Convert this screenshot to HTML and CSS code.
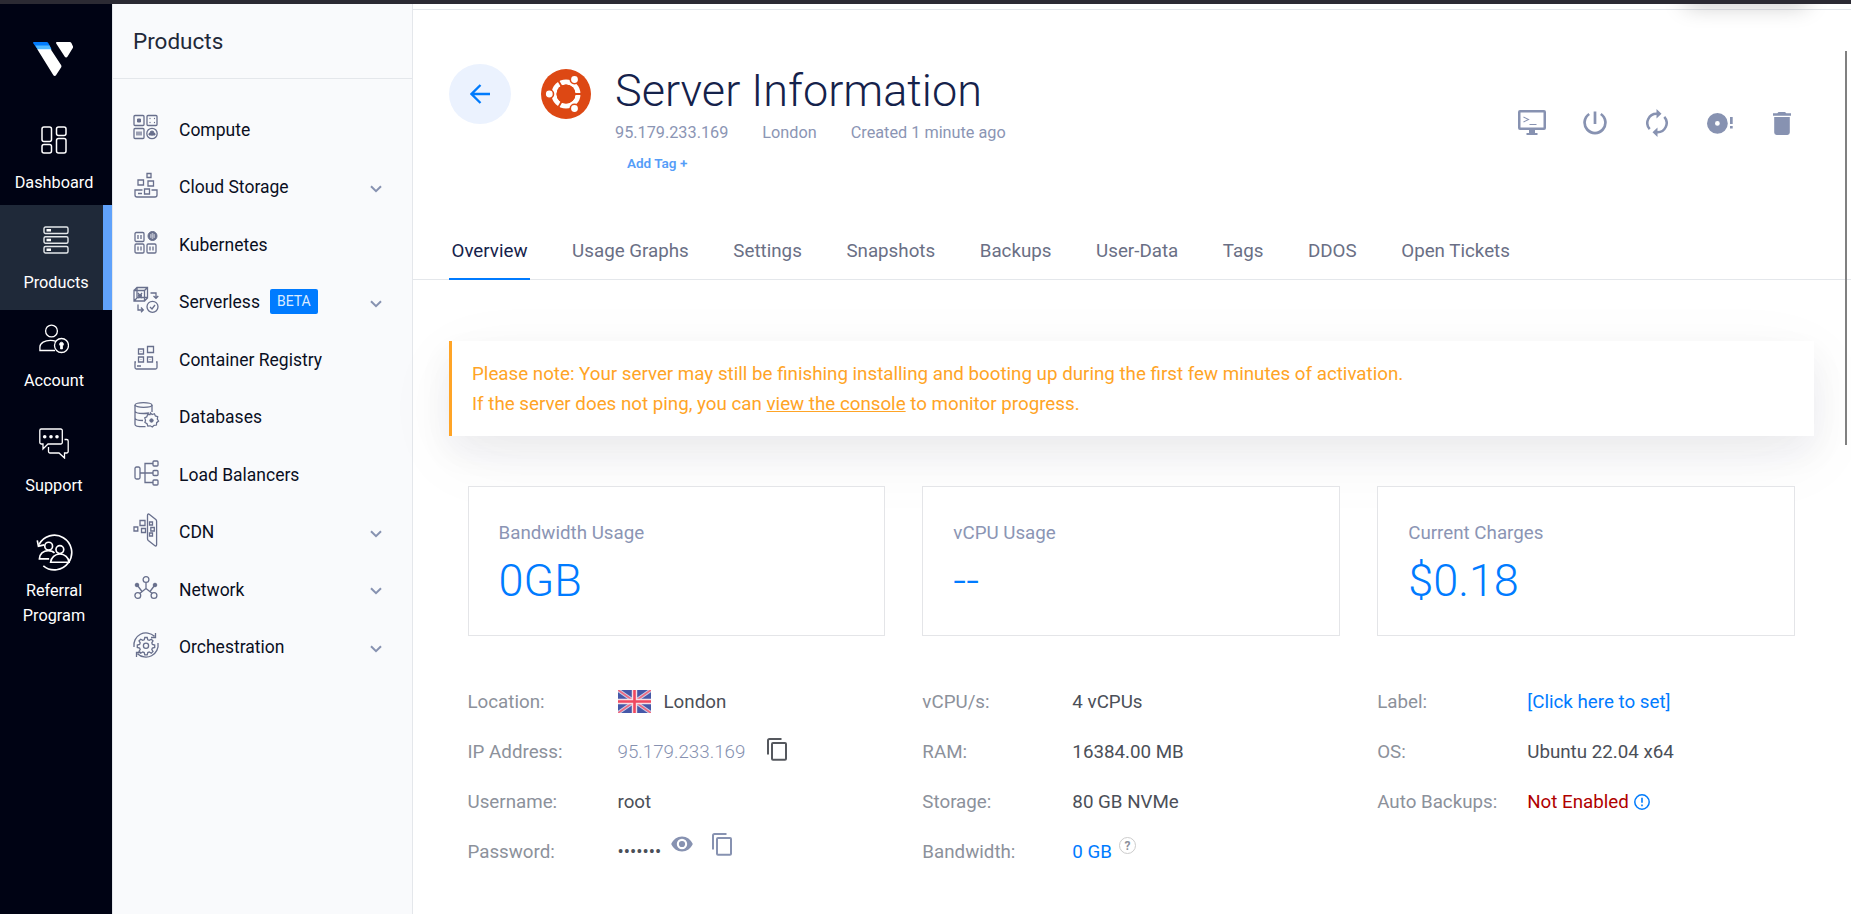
FILE: index.html
```html
<!DOCTYPE html>
<html lang="en">
<head>
<meta charset="utf-8">
<title>Server Information</title>
<link rel="stylesheet" href="styles.css">
</head>
<body>
<div class="topbar"></div>
<div class="app">
  <nav class="rail">
    <a class="logo" href="#"><svg width="40" height="34" viewBox="0 0 40 34"><path d="M0.8 0H13.600a2 2 0 0 1 1.700 0.900L18.500 7H4.300L0.400 1.600C-.2.800 0 0 .8 0Z" fill="#007bfc"/><path d="M2.300 3.500H16.500L18.500 8H5Z" fill="#51b9ff"/><path d="M4.300 7.300H17.700L28.200 23.200a2 2 0 0 1 0 2L23 33.200a1.500 1.500 0 0 1-2.600 0Z" fill="#fff"/><path d="M24 0H36.800a2 2 0 0 1 1.600.9L39.800 4a2 2 0 0 1 0 2L34.400 14.800a1.500 1.500 0 0 1-2.600 0L23.200 1.500C22.700.600 23.200 0 24 0Z" fill="#fff"/></svg></a>
    <a class="rail-item" href="#">
      <svg width="26" height="28" viewBox="0 0 26 28" fill="none" stroke="#fff" stroke-width="1.500"><rect x="1" y="1" width="9.500" height="14.500" rx="2"/><rect x="15.500" y="1" width="9.500" height="8.500" rx="2"/><rect x="1" y="18.500" width="9.500" height="8.500" rx="2"/><rect x="15.500" y="12.500" width="9.500" height="14.500" rx="2"/></svg>
      <span>Dashboard</span>
    </a>
    <a class="rail-item active" href="#">
      <svg width="26" height="28" viewBox="0 0 26 28" fill="none" stroke="#e4e7ea" stroke-width="1.400"><rect x="1" y="1" width="24" height="6.500" rx="1.500"/><rect x="1" y="10.700" width="24" height="6.500" rx="1.500"/><rect x="1" y="20.500" width="24" height="6.500" rx="1.500"/><path d="M3.500 4.300H8M3.500 14H8M3.500 23.800H8" stroke="#fff" stroke-width="2.400"/></svg>
      <span>Products</span>
    </a>
    <a class="rail-item account" href="#">
      <svg width="30" height="30" viewBox="0 0 30 30" fill="none" stroke="#fff" stroke-width="1.300"><circle cx="12.500" cy="7" r="5.900"/><path d="M16 26.500H.9V23c0-4 5-6.700 10.500-6.700 2 0 4 .4 5.600 1"/><circle cx="22.500" cy="21.500" r="7"/><path d="M22.500 18.200a2 2 0 0 1 1 3.700v3h-2v-3a2 2 0 0 1 1-3.700Z" fill="#fff" stroke-width=".8"/></svg>
      <span>Account</span>
    </a>
    <a class="rail-item support" href="#">
      <svg width="30" height="31" viewBox="0 0 30 31" fill="none" stroke="#fff" stroke-width="1.300"><path d="M2.200 1h19.600a1.500 1.500 0 0 1 1.500 1.500v12a1.500 1.500 0 0 1-1.500 1.500H9l-5 5V16H2.200A1.500 1.500 0 0 1 .8 14.500v-12A1.500 1.500 0 0 1 2.200 1Z"/><path d="M25.500 11.500h2.200a1.500 1.500 0 0 1 1.500 1.500v10.500a1.500 1.500 0 0 1-1.500 1.500H25.500v5L20 25H11a1.500 1.500 0 0 1-1.500-1.500V19"/><g fill="#fff" stroke="none"><circle cx="5.700" cy="8.800" r="1.800"/><circle cx="12" cy="8.800" r="1.800"/><circle cx="18" cy="8.800" r="1.800"/></g></svg>
      <span>Support</span>
    </a>
    <a class="rail-item referral" href="#">
      <svg width="37" height="38" viewBox="0 0 37 38" fill="none" stroke="#fff" stroke-width="1.700"><path d="M2.500 11A17.800 17.800 0 1 1 7 32.700"/><path d="M.8 6.500 2 12.500l6-1.300" /><circle cx="12.500" cy="12.500" r="4"/><path d="M13 25.500H3c0-5 4-8.500 9-8.500 2.700 0 5 .8 6.500 2.500"/><circle cx="24" cy="16" r="4"/><path d="M14.500 29h19c-.500-5-4.500-8.500-9.500-8.500s-9 3.500-9.500 8.500Z"/></svg>
      <span>Referral Program</span>
    </a>
  </nav>
  <aside class="panel">
    <h2 class="panel-title">Products</h2>
    <ul class="menu">
      <li><svg class="mi first" viewBox="0 0 26 26"><rect x="1" y="1.500" width="10" height="10" rx="1"/><rect x="14" y="1.500" width="10" height="10" rx="1"/><rect x="1" y="14.500" width="10" height="10" rx="1"/><circle cx="19" cy="19.500" r="5.200"/><path d="M4.500 5h3v3h-3ZM16 19.500h6v1.500h-6Z" class="f"/><path d="M4 17.500v4M6 17.500v4M8 17.500v4" /><path d="M17 4.500v.1M21.500 4.500v.1M17 8.500v.1M21.500 8.500v.1" stroke-linecap="round"/><circle cx="19" cy="19" r="2" class="f"/></svg><span>Compute</span></li>
      <li><svg class="mi" viewBox="0 0 26 26"><path d="M14 1.500h4v4h-4ZM5 8h5.500v5H5ZM15 9h5.500v5H15ZM11.500 17h5v5h-5Z"/><path d="M9.500 18H2v5a2 2 0 0 0 2 2h18a2 2 0 0 0 2-2v-5h-5.500M5 21.500h4"/></svg><span>Cloud Storage</span><svg class="chev" viewBox="0 0 12 8"><path d="M1 1.200 6 6.200 11 1.200"/></svg></li>
      <li><svg class="mi" viewBox="0 0 26 26"><rect x="2" y="2.500" width="9" height="9" rx="1.200"/><rect x="2" y="14" width="9" height="9" rx="1.200"/><rect x="14" y="14" width="9" height="9" rx="1.200"/><path d="M5 5v4M8 5v4M5 16.500v4M8 16.500v4M17 16.500v4M20 16.500v4"/><circle cx="19.500" cy="6" r="4.500" class="f"/><g class="k"><circle cx="19.500" cy="6" r="2.200"/><path d="M19.500 3v6M17 4.500l5 3M22 4.500l-5 3"/></g></svg><span>Kubernetes</span></li>
      <li><svg class="mi" viewBox="0 0 26 26"><path d="M1 3.500h10.500v10.500H1ZM1 3.500l3-3h10.500v10.500l-3 3M11.500 3.500l3-3M4 1v9.500H14M1 14l3-3"/><path d="m5 6 4 5M9 6l-4 5M5 8.500h4"/><circle cx="19.500" cy="19.800" r="5.500"/><path d="m17 20 2 2 3-4M17.500 6h5.500v5M20.500 9l2.500 2.300L25.300 9M5 17.500V23h5M8 20.500l2.300 2.500L8 25.300"/></svg><span>Serverless</span><b class="beta">BETA</b><svg class="chev" viewBox="0 0 12 8"><path d="M1 1.200 6 6.200 11 1.200"/></svg></li>
      <li><svg class="mi" viewBox="0 0 26 26"><path d="M14.500 1.500h6v6h-6ZM5.500 4h5v5h-5ZM5.500 12h5v5h-5ZM14.500 12h5v5h-5ZM8 6.500v.5M8 14.500v.5M17 14.500v.5M4 21h4"/><path d="M3 17H2v5.500a1.500 1.500 0 0 0 1.500 1.500h19a1.500 1.500 0 0 0 1.500-1.500V17h-1"/></svg><span>Container Registry</span></li>
      <li><svg class="mi" viewBox="0 0 26 26"><ellipse cx="10.500" cy="3" rx="8.500" ry="2.300"/><path d="M2 3v19.500c0 1.200 3.500 2.200 8.500 2.200h2M19 3v7M2 9c0 1.500 3.500 2.500 8.500 2.500 2 0 4-.2 5.500-.500M2 16c0 1.500 3.500 2.500 8 2.500"/><path d="m17.500 11 1.800 1.700 2.400-.8 1 2.300 2.400.8-.4 2.500 1.300 2-2 1.700-.2 2.500-2.500.3-1.800 1.700-2.200-1.200-2.500.2-.8-2.400-2.200-1.200.6-2.500-.8-2.400 2.200-1.200.9-2.400 2.500.2Z" transform="translate(.6 .3) scale(.96)"/><circle cx="18.500" cy="18.500" r="1.700" class="f"/></svg><span>Databases</span></li>
      <li><svg class="mi" viewBox="0 0 26 26"><rect x="2" y="7" width="5" height="12" rx="1.500"/><rect x="20" y="1" width="5" height="5" rx="1"/><rect x="20" y="10.500" width="5" height="5" rx="1"/><rect x="20" y="20" width="5" height="5" rx="1"/><path d="M20 3.500h-8v19h8M7 13h13"/></svg><span>Load Balancers</span></li>
      <li><svg class="mi tall" viewBox="0 0 26 34"><path d="M14.500 2.200c0-1 .9-1.500 1.700-1L22.800 6.500c.5.500.8 1 .8 1.700V31.800c0 1-.8 1.500-1.700 1L15.300 27.500c-.5-.500-.8-1-.8-1.700ZM7 7.500h5v5H7ZM1 14h3.800v4H1ZM8.500 15.500h4v4h-4ZM16.500 9h3v3h-3ZM17.800 14.500h3.500v3.500h-3.500ZM16.500 20h3v3h-3Z"/></svg><span>CDN</span><svg class="chev" viewBox="0 0 12 8"><path d="M1 1.200 6 6.200 11 1.200"/></svg></li>
      <li><svg class="mi" viewBox="0 0 26 26"><circle cx="13" cy="4.500" r="2.900"/><circle cx="4.800" cy="20.500" r="2.900"/><circle cx="21" cy="20.500" r="2.900"/><path d="M13 7.500v6l-6.300 5M13 13.500l6.300 5M4.500 10.500 9 16.500M21.500 10.500 17 16.500"/><circle cx="4" cy="10" r="1.800" class="f"/><circle cx="22" cy="10" r="1.800" class="f"/></svg><span>Network</span><svg class="chev" viewBox="0 0 12 8"><path d="M1 1.200 6 6.200 11 1.200"/></svg></li>
      <li><svg class="mi" viewBox="0 0 26 26"><path d="M1 15A12.200 12.200 0 0 1 21.500 4.300M25 11A12.200 12.200 0 0 1 4.500 21.700M22.500 1v4.500H18M3.500 25v-4.500H8"/><path d="M11.800 5.500h2.400l.6 2.300 1.500.600 2-1.200 1.700 1.700-1.200 2 .6 1.500 2.300.6v2.400l-2.300.6-.6 1.500 1.200 2-1.700 1.700-2-1.200-1.500.6-.6 2.300h-2.400l-.6-2.300-1.500-.600-2 1.200L6 19.500l1.200-2-.6-1.500-2.300-.6V13l2.300-.6.600-1.500-1.200-2L7.700 7.200l2 1.200 1.500-.6Z"/><circle cx="13" cy="13.800" r="2.600"/></svg><span>Orchestration</span><svg class="chev" viewBox="0 0 12 8"><path d="M1 1.200 6 6.200 11 1.200"/></svg></li>
    </ul>
  </aside>
  <main class="main">
    <header class="head">
      <a class="back" href="#"><svg width="20" height="20" viewBox="0 0 20 20"><path d="M20 10H2M10.500 1 1.500 10l9 9" fill="none" stroke="#007bfc" stroke-width="2.300"/></svg></a>
      <svg class="os" width="50" height="50" viewBox="0 0 50 50"><circle cx="25" cy="25" r="25" fill="#dd4814"/><circle cx="25" cy="25" r="12" fill="none" stroke="#fff" stroke-width="5"/><path d="M25 25H45M25 25 15 7.700M25 25 15 42.300" stroke="#dd4814" stroke-width="1.800"/><g fill="#fff" stroke="#dd4814" stroke-width="1.600"><circle cx="8.300" cy="25" r="4.200"/><circle cx="33.500" cy="10.500" r="4.200"/><circle cx="33.500" cy="39.500" r="4.200"/></g><circle cx="25" cy="25" r="9.500" fill="#dd4814"/></svg>
      <div class="head-text">
        <h1>Server Information</h1>
        <p class="meta"><span>95.179.233.169</span><span>London</span><span>Created 1 minute ago</span></p>
        <a class="tag" href="#">Add Tag +</a>
      </div>
      <div class="actions">
        <span><svg width="28" height="26" viewBox="0 0 28 26"><path fill-rule="evenodd" d="M2 0h24a2 2 0 0 1 2 2v16a2 2 0 0 1-2 2H17v3h2.500v2h-11v-2H11v-3H2a2 2 0 0 1-2-2V2A2 2 0 0 1 2 0Zm.500 2.500v15h23v-15Z"/><path d="m5.500 7 5 2.500-5 2.500M11.500 14.500h7" fill="none" stroke="#8792b1" stroke-width="1.100"/></svg></span>
        <span><svg width="24" height="24" viewBox="0 0 24 24"><path d="M6.200 3A10.400 10.400 0 1 0 17.800 3M12 .5V13" fill="none" stroke="#8792b1" stroke-width="2.700"/></svg></span>
        <span><svg width="22" height="28" viewBox="0 0 22 28"><path d="M18.300 7.900A9.200 9.200 0 0 1 11 23.200M3.700 20.100A9.200 9.200 0 0 1 11 4.800" fill="none" stroke="#8792b1" stroke-width="2.500"/><path d="M10.500 0v9.500L15.500 4.800ZM11.500 28v-9.500L6.500 23.200Z"/></svg></span>
        <span><svg width="26" height="21" viewBox="0 0 26 21"><path fill-rule="evenodd" d="M10.400 0a10.400 10.400 0 1 1 0 20.800 10.400 10.400 0 0 1 0-20.800Zm0 8a2.400 2.400 0 1 0 0 4.800 2.400 2.400 0 0 0 0-4.800ZM23 4h2.700v7H23Zm0 9h2.700v2.500H23Z"/></svg></span>
        <span><svg width="18" height="23" viewBox="0 0 18 23"><path d="M5.500 0h6.500l1.300 1.200H18V3.700H0V1.200H4.300ZM1.200 5h15.600v15.500a2.400 2.400 0 0 1-2.400 2.400H3.600a2.400 2.400 0 0 1-2.400-2.400Z"/></svg></span>
      </div>
    </header>
    <nav class="tabs">
      <a class="on" href="#">Overview</a><a href="#">Usage Graphs</a><a href="#">Settings</a><a href="#">Snapshots</a><a href="#">Backups</a><a href="#">User-Data</a><a href="#">Tags</a><a href="#">DDOS</a><a href="#">Open Tickets</a>
    </nav>
    <div class="notice">Please note: Your server may still be finishing installing and booting up during the first few minutes of activation.<br>If the server does not ping, you can <a href="#">view the console</a> to monitor progress.</div>
    <section class="cards">
      <div class="card"><p>Bandwidth Usage</p><strong>0GB</strong></div>
      <div class="card"><p>vCPU Usage</p><strong>--</strong></div>
      <div class="card"><p>Current Charges</p><strong>$0.18</strong></div>
    </section>
    <section class="details">
      <dl>
        <dt>Location:</dt><dd><svg class="flag" width="33" height="23" viewBox="0 0 33 23"><path fill="#4558a8" d="M0 0h33v23H0z"/><path d="m0 0 33 23M33 0 0 23" stroke="#c9cfe8" stroke-width="3.600"/><path d="m0 0 33 23M33 0 0 23" stroke="#ee6a82" stroke-width="1.800"/><path d="M16.500 0v23M0 11.500h33" stroke="#f6dfe6" stroke-width="5.400"/><path d="M16.500 0v23M0 11.500h33" stroke="#f0485f" stroke-width="2.600"/></svg>London</dd>
        <dt>IP Address:</dt><dd class="ip">95.179.233.169<svg class="copy dark" width="20" height="23" viewBox="0 0 20 23"><path d="M1 16.500V2.500A1.500 1.500 0 0 1 2.500 1H14.500"/><rect x="5" y="5" width="14" height="16.800" rx="1"/></svg></dd>
        <dt>Username:</dt><dd>root</dd>
        <dt>Password:</dt><dd class="pw"><span class="dots">•••••••</span><svg class="eye" width="22" height="16" viewBox="0 0 22 16"><path fill="#8792b1" fill-rule="evenodd" d="M11 .5c4.800 0 8.900 3 10.800 7.500-1.900 4.500-6 7.500-10.800 7.500S2.100 12.500.2 8C2.100 3.500 6.200.5 11 .5Zm0 2.300a5.200 5.200 0 1 0 0 10.400 5.200 5.200 0 0 0 0-10.400Z"/><circle cx="11" cy="8" r="3.100" fill="#8792b1"/></svg><svg class="copy" width="20" height="23" viewBox="0 0 20 23"><path d="M1 16.500V2.500A1.500 1.500 0 0 1 2.500 1H14.500"/><rect x="5" y="5" width="14" height="16.800" rx="1"/></svg></dd>
      </dl>
      <dl>
        <dt>vCPU/s:</dt><dd>4 vCPUs</dd>
        <dt>RAM:</dt><dd>16384.00 MB</dd>
        <dt>Storage:</dt><dd>80 GB NVMe</dd>
        <dt>Bandwidth:</dt><dd class="blue">0 GB<span class="help">?</span></dd>
      </dl>
      <dl>
        <dt>Label:</dt><dd class="blue">[Click here to set]</dd>
        <dt>OS:</dt><dd>Ubuntu 22.04 x64</dd>
        <dt>Auto Backups:</dt><dd class="red">Not Enabled<svg class="info" width="16" height="16" viewBox="0 0 16 16"><circle cx="8" cy="8" r="7.200" fill="none" stroke="#007bfc" stroke-width="1.500"/><path d="M8 3.800v5M8 10.500v1.700" stroke="#007bfc" stroke-width="1.600"/></svg></dd>
      </dl>
    </section>
  </main>
</div>
<div class="scroll"></div>
<div class="drop"></div>
</body>
</html>
```
FILE: styles.css
```css
* { box-sizing: border-box; }
html, body { margin: 0; height: 100%; overflow: hidden; }
body { display: flex; flex-direction: column; font-family: Roboto, "Liberation Sans", sans-serif; background: #fff; color: #4b4f58; }
a { color: inherit; text-decoration: none; }
h1, h2, p, ul, dl, dd { margin: 0; padding: 0; }
.topbar { position: relative; z-index: 2; height: 4px; flex: none; background: #2b2a33; }
.app { flex: 1; display: flex; min-height: 0; }

.rail { width: 112px; flex: none; background: #000314; color: #fff; font-size: 16.25px; line-height: 25px; text-align: center; }
.logo { display: flex; height: 100px; padding: 38px 0 0 33px; }
.rail-item { display: flex; flex-direction: column; align-items: center; height: 101px; padding: 22px 4px 0 0; }
.rail-item span { margin-top: 16px; }
.active { height: 105px; padding: 21px 0 0; background: #1f2939; border-right: 9px solid #60a2fb; padding-left: 9px; }
.account { height: 106px; padding-top: 14px; }
.account span { margin-top: 14px; }
.support { height: 111px; padding-top: 12px; }
.support span { margin-top: 14px; }
.referral { padding-top: 7px; }
.referral span { margin-top: 7px; width: 80px; }

.panel { width: 301px; flex: none; background: #f9fafc; border: solid #e4e7eb; border-width: 0 1px; }
.panel-title { height: 75px; padding: 21px 0 0 20px; border-bottom: 1px solid #e4e7eb; font-size: 22.5px; line-height: 32px; font-weight: 400; color: #1f2939; }
.menu { list-style: none; padding-top: 20.75px; }
.menu li { display: flex; align-items: center; height: 57.5px; padding: 2px 30px 0 20.5px; font-size: 17.5px; color: #0a0f1f; }
.mi { width: 26px; height: 26px; margin: -4px 20px 0 -.5px; fill: none; stroke: #686f8c; stroke-width: 1.300; overflow: visible; }
.mi.tall { height: 34px; }
.mi.first { margin-top: -6px; }
.f { fill: #686f8c; stroke-width: 1; }
.k { stroke: #c5c9d6; stroke-width: .7; }
.chev { width: 12px; height: 8px; margin: 3px 0 0 auto; fill: none; stroke: #8792b1; stroke-width: 2; }
.beta { margin: -1px 0 0 10px; padding: 0 7px; height: 25px; line-height: 25px; background: #007bff; border-radius: 2px; font-size: 14px; font-weight: 400; color: #dcebff; }

.main { flex: 1; min-width: 0; display: flex; flex-direction: column; }
.head { height: 220px; flex: none; margin-top: 5px; padding: 54px 55px 0 36px; border-top: 1px solid #e4e7eb; display: flex; align-items: flex-start; }
.back { width: 62px; height: 60px; border-radius: 50%; background: #ebf2fe; display: flex; align-items: center; justify-content: center; }
.os { margin: 5px 24px 0 30px; }
h1 { font-size: 45px; font-weight: 300; line-height: 54px; color: #15224b; }
.meta { display: flex; gap: 34px; margin-top: 3px; font-size: 16.25px; line-height: 24px; color: #8b95b4; }
.tag { display: block; margin: 9px 0 0 12px; font-size: 13.5px; line-height: 18px; font-weight: 600; color: #559df8; }
.actions { display: flex; align-items: center; height: 28px; margin: 45px 0 0 auto; gap: 34.5px; }
.actions span { display: flex; width: 28px; justify-content: center; }
.actions svg { fill: #8792b1; }

.tabs { display: flex; flex: none; height: 51px; padding-left: 36px; gap: 39.6px; border-bottom: 1px solid #e4e7eb; font-size: 18.75px; line-height: 44px; color: #6a6f85; }
.tabs a { padding: 0 2.500px; height: 51px; border-bottom: 2px solid transparent; }
.tabs .on { color: #15224b; border-color: #007bff; }

.notice { flex: none; height: 95px; margin: 61px 37px 50px 36px; padding: 18px 20px; border-left: 3px solid #ffa426; background: #fff; color: #ffa426; font-size: 18.75px; line-height: 30px; box-shadow: 0 15px 35px rgba(30, 36, 60, .06), 0 20px 75px rgba(30, 36, 60, .05); }
.notice a { text-decoration: underline; }
.cards { position: relative; display: grid; grid-template-columns: repeat(3, 1fr); gap: 37.1px; margin: 0 56px 0 54.5px; }
.card { height: 150px; padding: 33px 30px; background: #fff; border: 1px solid #e4e5e8; }
.card p { font-size: 18.75px; line-height: 26px; color: #8b95b4; }
.card strong { display: block; font-size: 45px; line-height: 54px; margin-top: 8px; font-weight: 300; color: #007bff; }
.details { display: grid; grid-template-columns: repeat(3, 1fr); gap: 37.1px; margin: 40.5px 56px 0 54.5px; }
dl { display: grid; grid-template-columns: 150px 1fr; grid-auto-rows: 50px; align-content: start; font-size: 18.75px; line-height: 50px; white-space: nowrap; }
dt { color: #8c919b; }
dd { display: flex; align-items: center; }
.flag { margin: -1px 13px 0 0; }
.ip { color: #8792b1; font-weight: 300; }
.copy { fill: none; stroke: #8792b1; stroke-width: 2; margin: -15px 0 0 19px; }
.ip .copy { margin: -5px 0 0 21.2px; }
.dark { stroke: #55585e; }
.eye { margin: -16px 0 0 10px; }
.dots { font-size: 18.5px; }
.blue { color: #007bff; }
.red { color: #b00000; }
.info { margin-left: 5px; }
.help { width: 17px; height: 17px; margin: -13px 0 0 7px; border: 1px solid #ccc; border-radius: 50%; font-size: 12px; font-weight: 700; line-height: 16px; text-align: center; color: #8c919b; }
.scroll { position: absolute; left: 1845px; top: 51px; width: 2px; height: 394px; background: #808080; }
.drop { position: absolute; left: 1685px; top: -16px; width: 122px; height: 20px; box-shadow: 0 2px 22px rgba(0, 0, 0, .22); }
```
